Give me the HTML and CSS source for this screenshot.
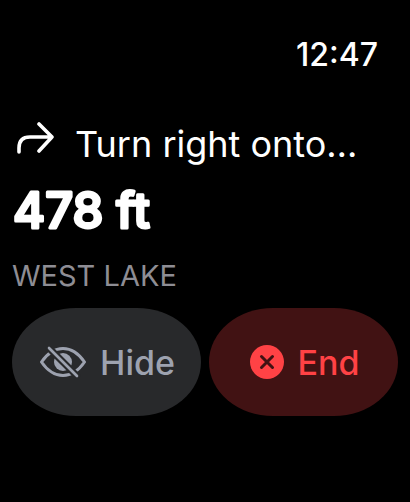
FILE: index.html
```
<!DOCTYPE html>
<html lang="en">
<head>
    <meta charset="UTF-8">
    <meta name="viewport" content="width=device-width, initial-scale=1.0">
    <title>Navigation</title>
    <link rel="stylesheet" href="styles.css">
</head>
<body>
    <header class="status">
        <time>12:47</time>
    </header>

    <main class="route">
        <div class="step">
            <svg class="turn-icon" viewBox="0 0 38 32" aria-hidden="true">
                <path d="M2 30V26Q2 15 13 15H35M22 2L35 15L22 29"/>
            </svg>
            <h1>Turn right onto…</h1>
        </div>
        <p class="distance">
            <!-- svg text so the stroke can round the letter corners -->
            <svg class="distance-text"><text x="1" y="48">478 ft</text></svg>
        </p>
        <p class="place">WEST LAKE</p>

        <div class="buttons">
            <button type="button" class="hide">
                <svg class="eye-icon" viewBox="0 0 46 32" aria-hidden="true">
                    <path class="outline" d="M1.500 16C7 8 14 2.500 23 2.500S39 8 44.500 16C39 24 32 29.500 23 29.500S7 24 1.500 16Z"/>
                    <circle class="pupil" cx="23" cy="16" r="9"/>
                    <path class="gap" d="M9 2L37 30"/>
                    <path class="slash" d="M9 2L37 30"/>
                </svg>
                <span>Hide</span>
            </button>
            <button type="button" class="end">
                <svg class="close-icon" viewBox="0 0 34 34" aria-hidden="true">
                    <circle cx="17" cy="17" r="17"/>
                    <path d="M11.500 11.500L22.500 22.500M22.500 11.500L11.500 22.500"/>
                </svg>
                <span>End</span>
            </button>
        </div>
    </main>
</body>
</html>
```
FILE: styles.css
```
* {
    box-sizing: border-box;
}
body {
    margin: 0;
    padding: 34px 12px;
    background-color: #000;
    color: #fff;
    font-family: Inter, sans-serif;
}
h1, p {
    margin: 0;
}
svg {
    flex: none;
    fill: none;
    stroke-linecap: round;
    stroke-linejoin: round;
}
.status {
    padding-right: 20px;
    text-align: right;
    font-size: 32px;
    font-weight: 500;
    line-height: 42px;
}
.step {
    display: flex;
    align-items: center;
    gap: 20px;
    margin-top: 44px;
    padding-left: 5px;
}
.step h1 {
    font-size: 36px;
    font-weight: 400;
    line-height: 48px;
    white-space: nowrap;
}
.turn-icon {
    width: 38px;
    height: 32px;
    margin-bottom: 12px;
    stroke: #fff;
    stroke-width: 3.6;
}
.distance {
    margin-top: 12px;
    font-size: 49px;
    font-weight: 500;
}
.distance-text {
    display: block;
    width: 100%;
    height: 64px;
    overflow: visible;
    fill: #fff;
    stroke: #fff;
    stroke-width: 3;
}
.place {
    margin-top: 12px;
    color: #8e8d94;
    font-size: 29px;
    line-height: 40px;
}
.buttons {
    display: grid;
    grid-template-columns: 1fr 1fr;
    gap: 8px;
    margin-top: 12px;
}
button {
    display: flex;
    align-items: center;
    justify-content: center;
    gap: 14px;
    height: 108px;
    padding: 0 0 0 2px;
    border: none;
    border-radius: 64px / 54px;
    font-family: Inter, sans-serif;
    font-size: 34px;
    font-weight: 500;
    cursor: pointer;
}
.hide {
    background-color: #28292b;
    color: #9da2af;
}
.end {
    background-color: #411213;
    color: #ff4245;
}
.eye-icon {
    width: 46px;
    height: 32px;
}
.outline {
    stroke: #9da2af;
    stroke-width: 3;
}
.pupil {
    fill: #9da2af;
}
.gap {
    stroke: #28292b;
    stroke-width: 7;
}
.slash {
    stroke: #9da2af;
    stroke-width: 2.6;
}
.close-icon {
    width: 34px;
    height: 34px;
    fill: #ff4245;
    stroke-width: 3;
}
.close-icon path {
    stroke: #411213;
}
```
